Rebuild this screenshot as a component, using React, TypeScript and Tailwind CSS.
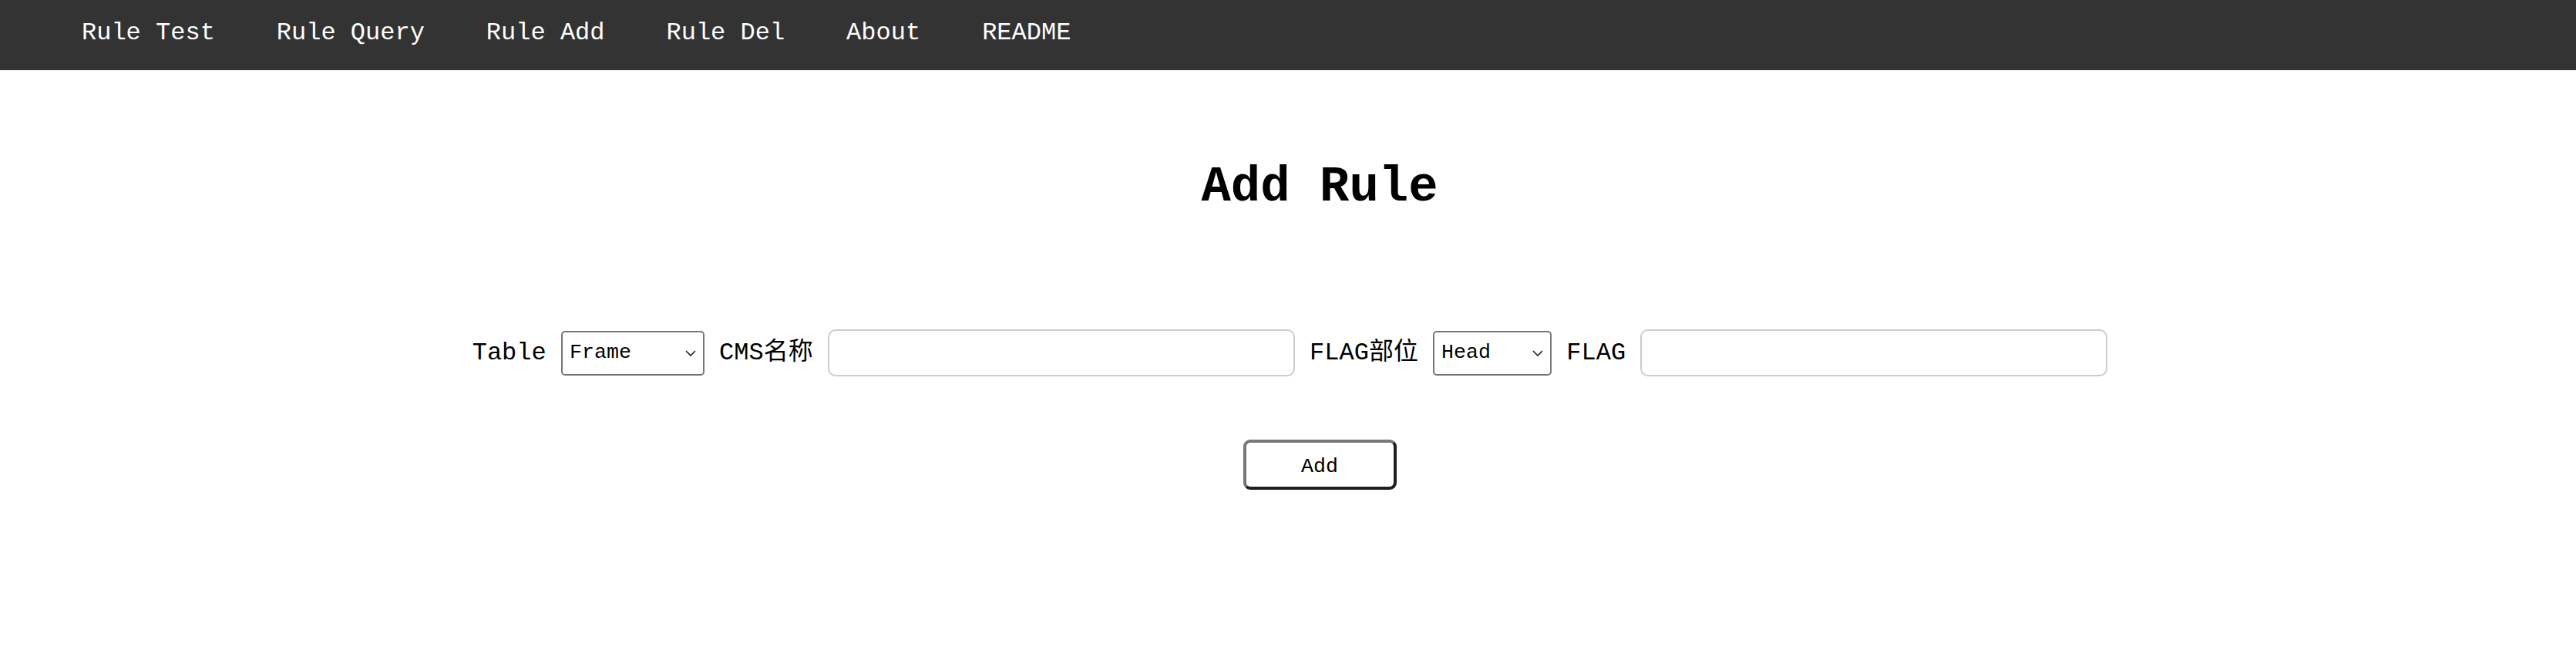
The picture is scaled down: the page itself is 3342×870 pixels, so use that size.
import React from "react";

const mono = "font-['Liberation_Mono','Courier_New','Noto_Sans_CJK_SC',monospace]";

function Chevron() {
  return (
    <svg
      className="pointer-events-none absolute right-[11px] top-1/2 -translate-y-1/2"
      width="14"
      height="9"
      viewBox="0 0 14 9"
      fill="none"
    >
      <path d="M1 1.5L7 7.5L13 1.5" stroke="#222" strokeWidth="1.6" />
    </svg>
  );
}

function Select({ value, width }: { value: string; width: string }) {
  return (
    <div className={`relative h-[58px] ${width}`}>
      <select
        defaultValue={value}
        className={`h-full w-full appearance-none rounded-[5px] border-2 border-[#767676] bg-white pl-[9px] pr-[30px] text-[26.67px] leading-none text-black outline-none ${mono}`}
      >
        <option>{value}</option>
      </select>
      <Chevron />
    </div>
  );
}

function TextInput() {
  return (
    <input
      type="text"
      className="h-[61px] w-[606px] rounded-[10px] border-2 border-[#cccccc] bg-white px-[10px] text-[26.67px] outline-none"
    />
  );
}

export default function App() {
  const links = ["Rule Test", "Rule Query", "Rule Add", "Rule Del", "About", "README"];
  return (
    <div className={`min-h-[870px] w-full bg-white text-black ${mono}`}>
      <nav className="flex h-[91px] w-full bg-[#333333] pl-[66px]">
        {links.map((l) => (
          <a
            key={l}
            className="block whitespace-pre px-[40px] pt-[27px] text-[32px] leading-[32px] text-white"
          >
            {l}
          </a>
        ))}
      </nav>

      <div className="pl-[82px] pt-[120px] text-center">
        <h1 className="text-[64px] font-bold leading-[64px]">Add Rule</h1>
      </div>

      <div className="mt-[152px] flex items-center justify-center gap-[19.2px] pl-[5px] text-[32px] leading-[36px]">
        <span>Table</span>
        <Select value="Frame" width="w-[186px]" />
        <span>CMS名称</span>
        <TextInput />
        <span>FLAG部位</span>
        <Select value="Head" width="w-[154px]" />
        <span>FLAG</span>
        <TextInput />
      </div>

      <div className="mt-[82px] flex justify-center pl-[82px]">
        <button
          className={`h-[65px] w-[199px] rounded-[9px] border-[4px] border-t-[#767676] border-l-[#767676] border-b-[#1f1f1f] border-r-[#1f1f1f] bg-white pt-[5px] text-[26.67px] text-black ${mono}`}
        >
          Add
        </button>
      </div>
    </div>
  );
}
